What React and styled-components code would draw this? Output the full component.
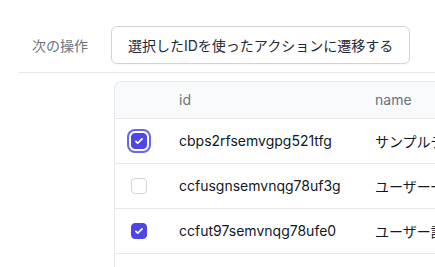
import React from 'react';
import styled, { createGlobalStyle } from 'styled-components';

const GlobalStyle = createGlobalStyle`
  body {
    margin: 0;
    background: #ffffff;
    font-family: Inter, "Noto Sans CJK JP", sans-serif;
    color: #111827;
    overflow: hidden;
  }
`;

const Page = styled.div`
  width: 435px;
  height: 267px;
  overflow: hidden;
`;

const ActionBar = styled.div`
  display: flex;
  align-items: center;
  gap: 23px;
  margin-left: 19px;
  padding: 26px 0 8px 13px;
  border-bottom: 1px solid #e5e7eb;
`;

const ActionLabel = styled.span`
  font-size: 14px;
  color: #6b7280;
  white-space: nowrap;
`;

const ActionButton = styled.button`
  height: 38px;
  padding: 0 16px;
  border: 1px solid #d1d5db;
  border-radius: 6px;
  background: #ffffff;
  font-family: inherit;
  font-size: 14px;
  color: #1f2937;
  white-space: nowrap;
  box-shadow: 0 1px 2px rgba(0, 0, 0, 0.04);
`;

const TableWrap = styled.div`
  margin: 8px 0 0 114px;
  width: 640px;
  border-left: 1px solid #e5e7eb;
  border-top: 1px solid #e5e7eb;
  border-top-left-radius: 8px;
  overflow: hidden;
`;

const Table = styled.table`
  width: 100%;
  border-collapse: collapse;
  table-layout: fixed;
`;

const HeadRow = styled.tr`
  background: #f9fafb;
  border-bottom: 1px solid #e5e7eb;
`;

const Th = styled.th`
  box-sizing: border-box;
  height: 36px;
  padding: 0 16px;
  text-align: left;
  font-size: 14px;
  font-weight: 400;
  color: #6b7280;
  width: ${(p) => p.$w || 'auto'};
`;

const Row = styled.tr`
  border-bottom: 1px solid #e5e7eb;
`;

const Td = styled.td`
  height: 44px;
  padding: 0 16px;
  font-size: 14px;
  color: #111827;
  white-space: nowrap;
  overflow: hidden;
  vertical-align: middle;
`;

const Box = styled.span`
  display: flex;
  align-items: center;
  justify-content: center;
  width: 16px;
  height: 16px;
  box-sizing: border-box;
  border-radius: 4px;
  border: 1px solid ${(p) => (p.$checked ? '#4f46e5' : '#d1d5db')};
  background: ${(p) => (p.$checked ? '#4f46e5' : '#ffffff')};
  box-shadow: ${(p) => (p.$focused ? '0 0 0 2px #ffffff, 0 0 0 4px #6366f1' : 'none')};
`;

const Checkbox = ({ checked, focused }) => (
  <Box $checked={checked} $focused={focused}>
    {checked && (
      <svg width="16" height="16" viewBox="0 0 16 16" fill="#ffffff">
        <path d="M12.207 4.793a1 1 0 010 1.414l-5 5a1 1 0 01-1.414 0l-2-2a1 1 0 011.414-1.414L6.5 9.086l4.293-4.293a1 1 0 011.414 0z" />
      </svg>
    )}
  </Box>
);

const rows = [
  { id: 'cbps2rfsemvgpg521tfg', name: 'サンプルデータ', checked: true, focused: true },
  { id: 'ccfusgnsemvnqg78uf3g', name: 'ユーザー一覧', checked: false },
  { id: 'ccfut97semvnqg78ufe0', name: 'ユーザー詳細', checked: true },
  { id: 'ccfv1a7semvnqg78ug10', name: 'ユーザー設定', checked: false },
];

const App = () => (
  <Page>
    <GlobalStyle />
    <ActionBar>
      <ActionLabel>次の操作</ActionLabel>
      <ActionButton>選択したIDを使ったアクションに遷移する</ActionButton>
    </ActionBar>
    <TableWrap>
      <Table>
        <thead>
          <HeadRow>
            <Th $w="48px" />
            <Th $w="196px">id</Th>
            <Th>name</Th>
          </HeadRow>
        </thead>
        <tbody>
          {rows.map((r) => (
            <Row key={r.id}>
              <Td>
                <Checkbox checked={r.checked} focused={r.focused} />
              </Td>
              <Td>{r.id}</Td>
              <Td>{r.name}</Td>
            </Row>
          ))}
        </tbody>
      </Table>
    </TableWrap>
  </Page>
);

export default App;
